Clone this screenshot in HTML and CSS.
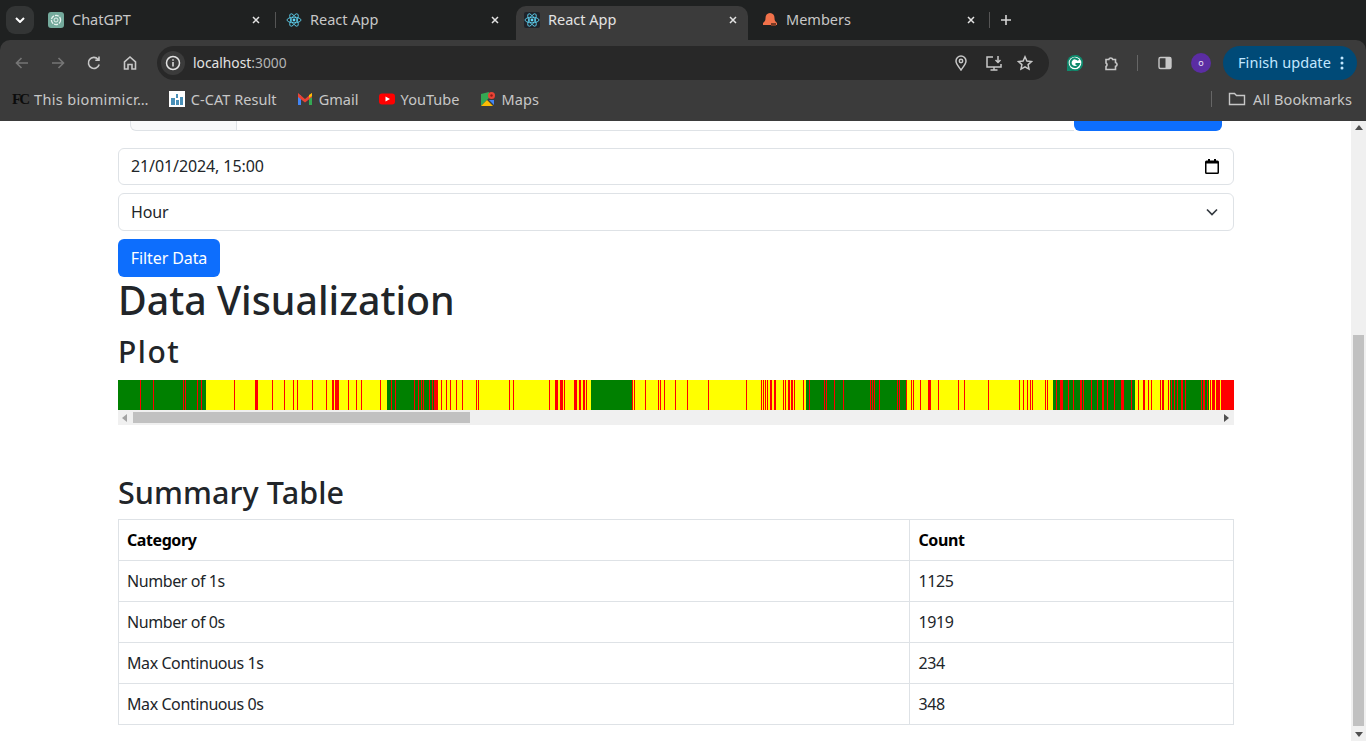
FILE: index.html
```html
<!DOCTYPE html>
<html lang="en">
<head>
	<meta charset="UTF-8">
	<title>React App</title>
	<link rel="stylesheet" href="styles.css">
</head>
<body>
<!-- browser chrome -->
<header class="chrome">
	<div class="tabstrip">
		<div class="tab-menu">
			<svg width="10" height="6" viewBox="0 0 10 6"><path class="ln-white" d="M1 1l4 4 4-4"/></svg>
		</div>
		<div class="tab tab-first">
			<svg class="favicon" viewBox="0 0 16 16"><rect width="16" height="16" rx="3" fill="#74aa9c"/><circle cx="8" cy="8" r="4.6" fill="none" stroke="#e8f3f0" stroke-width="1.3" stroke-dasharray="4 1"/><circle cx="8" cy="8" r="2" fill="none" stroke="#e8f3f0"/></svg>
			<span class="tab-title">ChatGPT</span>
			<svg class="tab-close" viewBox="0 0 8 8"><path d="M1 1l6 6M7 1L1 7"/></svg>
		</div>
		<i class="tab-sep"></i>
		<div class="tab">
			<svg class="favicon" viewBox="0 0 16 16"><g class="atom"><ellipse cx="8" cy="8" rx="7" ry="2.8"/><ellipse cx="8" cy="8" rx="7" ry="2.8" transform="rotate(60 8 8)"/><ellipse cx="8" cy="8" rx="7" ry="2.8" transform="rotate(120 8 8)"/></g><circle cx="8" cy="8" r="1.4" fill="#61dafb"/></svg>
			<span class="tab-title">React App</span>
			<svg class="tab-close" viewBox="0 0 8 8"><path d="M1 1l6 6M7 1L1 7"/></svg>
		</div>
		<div class="tab tab-active">
			<svg class="favicon favicon-dark" viewBox="0 0 16 16"><rect width="16" height="16" rx="2" fill="#20232a"/><g class="atom"><ellipse cx="8" cy="8" rx="7" ry="2.8"/><ellipse cx="8" cy="8" rx="7" ry="2.8" transform="rotate(60 8 8)"/><ellipse cx="8" cy="8" rx="7" ry="2.8" transform="rotate(120 8 8)"/></g><circle cx="8" cy="8" r="1.4" fill="#61dafb"/></svg>
			<span class="tab-title">React App</span>
			<svg class="tab-close" viewBox="0 0 8 8"><path d="M1 1l6 6M7 1L1 7"/></svg>
		</div>
		<div class="tab tab-last">
			<svg class="favicon" viewBox="0 0 16 16"><path fill="#f0714a" d="M8 1c3 0 4.500 2.200 4.500 5 0 2 .5 3.500 2.500 5v2H1v-2c2-1.500 2.500-3 2.500-5C3.500 3.200 5 1 8 1z"/><rect x="9" y="11" width="5" height="3" fill="#7a3a24"/></svg>
			<span class="tab-title">Members</span>
			<svg class="tab-close" viewBox="0 0 8 8"><path d="M1 1l6 6M7 1L1 7"/></svg>
		</div>
		<i class="tab-sep"></i>
		<svg class="tab-new" viewBox="0 0 12 12"><path d="M6 1v10M1 6h10"/></svg>
	</div>

	<div class="toolbar">
		<svg class="tool tool-off" viewBox="0 0 16 16"><path d="M14 8H2.500M7.500 3l-5 5 5 5"/></svg>
		<svg class="tool tool-off tool-fwd" viewBox="0 0 16 16"><path d="M2 8h11.500M8.500 3l5 5-5 5"/></svg>
		<svg class="tool tool-reload" viewBox="0 0 16 16"><path d="M13.200 9.500A5.500 5.500 0 1 1 12 4.200M13 1.500v3.700H9.300"/></svg>
		<svg class="tool tool-home" viewBox="0 0 16 16"><path d="M2.500 14V6.800L8 2l5.500 4.800V14h-3.500V9.500H6V14z"/></svg>
		<div class="omnibox">
			<span class="site-info">
				<svg width="16" height="16" viewBox="0 0 16 16"><circle cx="8" cy="8" r="6.500" fill="none" stroke="#e3e3e3" stroke-width="1.500"/><path d="M8 7v4.500M8 4.300v1.400" stroke="#e3e3e3" stroke-width="1.500"/></svg>
			</span>
			<span class="url">localhost<span class="url-port">:3000</span></span>
			<svg class="omni-icon omni-pin" viewBox="0 0 16 16"><path d="M8 15C5.500 11.500 3 8.800 3 6a5 5 0 0 1 10 0c0 2.800-2.500 5.500-5 9z"/><circle cx="8" cy="6" r="1.700"/></svg>
			<svg class="omni-icon omni-install" viewBox="0 0 18 16"><path d="M8 2H2v10h14V9M5.500 15h7M9 12v3M13 1v6M10.500 5l2.500 2.500L15.500 5"/></svg>
			<svg class="omni-icon omni-star" viewBox="0 0 16 16"><path d="M8 1.800l1.900 4.200 4.600.5-3.400 3.100.9 4.500L8 11.800l-4 2.300.9-4.500L1.500 6.500l4.600-.5z"/></svg>
		</div>
		<svg class="ext-g" viewBox="0 0 18 18"><path fill="#0f8a6d" d="M9 1a8 8 0 1 1-8 8v8h8z"/><circle cx="9" cy="9" r="8" fill="#0f8a6d"/><circle cx="9" cy="9" r="6.300" fill="#fff"/><path fill="none" stroke="#0f8a6d" stroke-width="2" d="M12.500 6.300A4.300 4.300 0 1 0 13 10H9.500"/></svg>
		<svg class="tool tool-ext" viewBox="0 0 16 16"><path d="M3 4.500h2.800a2 2 0 0 1 3.900 0h2.800v3a2 2 0 0 1 0 3.900v3.100H3v-3a2 2 0 0 0 0-3.500z"/></svg>
		<i class="tool-sep"></i>
		<svg class="panel-icon" viewBox="0 0 16 16"><rect x="2" y="2.500" width="12" height="11" rx="1.500" fill="none" stroke="#c7c7c7" stroke-width="1.400"/><rect x="8.500" y="2.500" width="5.500" height="11" fill="#c7c7c7"/></svg>
		<span class="avatar">o</span>
		<div class="update-pill">
			<span class="update-label">Finish update</span>
			<svg width="4" height="14" viewBox="0 0 4 14"><circle cx="2" cy="2" r="1.500"/><circle cx="2" cy="7" r="1.500"/><circle cx="2" cy="12" r="1.500"/></svg>
		</div>
	</div>

	<div class="bookmarks">
		<span class="bm bm-fc"><b class="fc-logo">FC</b><span class="bm-wide">This biomimicr…</span></span>
		<span class="bm">
			<svg class="bm-icon" viewBox="0 0 16 16"><rect width="16" height="16" fill="#fff"/><path fill="#4a90b8" d="M2 7h4v7H2zM7 3h2v4H7zM7 9h3v5H7zM11 6h3v8h-3z"/></svg>C-CAT Result
		</span>
		<span class="bm">
			<svg class="bm-icon" viewBox="0 0 16 16"><path fill="#4285f4" d="M1 4h3v10H1z"/><path fill="#34a853" d="M12 4h3v10h-3z"/><path fill="#ea4335" d="M1 2l7 6 7-6v4l-7 5.500L1 6z"/><path fill="#fbbc04" d="M12 4l3-2v3l-3 2z"/></svg>Gmail
		</span>
		<span class="bm">
			<svg class="bm-icon" viewBox="0 0 16 16"><rect y="2.500" width="16" height="11" rx="3" fill="#f00"/><path fill="#fff" d="M6.500 5.500v5L11 8z"/></svg>YouTube
		</span>
		<span class="bm">
			<svg class="bm-icon" viewBox="0 0 16 16"><path fill="#34a853" d="M1 3l8-2v6l-8 8z"/><path fill="#fbbc04" d="M1 15l6-6 6 6z"/><path fill="#4285f4" d="M9 9l5 5V9z"/><circle cx="11.500" cy="4.500" r="3.500" fill="#ea4335"/><circle cx="11.500" cy="4.500" r="1.200" fill="#8c1d18"/></svg>Maps
		</span>
		<i class="bm-sep"></i>
		<span class="bm bm-all">
			<svg class="bm-folder" viewBox="0 0 18 16"><path d="M1.500 13.500V2.500h5l2 2h8v9z"/></svg>All Bookmarks
		</span>
	</div>
</header>

<div class="viewport">
	<main class="page">
		<!-- input group, scrolled mostly out of view -->
		<div class="search-stub">
			<div class="stub-addon"></div>
			<div class="stub-input"></div>
			<div class="stub-btn"></div>
		</div>

		<div class="form-control">
			<span>21/01/2024, 15:00</span>
			<svg class="cal-icon" viewBox="0 0 14 15"><path d="M3 0h2v2H3zM9 0h2v2H9z" fill="#000"/><path fill="#000" d="M1.500 1.500h11A1.500 1.500 0 0 1 14 3v10.500a1.500 1.500 0 0 1-1.500 1.500h-11A1.500 1.500 0 0 1 0 13.500V3a1.500 1.500 0 0 1 1.500-1.500zM1.500 4.500v9h11v-9z"/></svg>
		</div>
		<div class="form-control form-select">
			<span>Hour</span>
			<svg class="chev-icon" viewBox="0 0 12 8"><path d="M1 1.500l5 5 5-5"/></svg>
		</div>
		<button class="btn-primary">Filter Data</button>

		<h1>Data Visualization</h1>
		<h3 class="plot-title">Plot</h3>

		<div class="plot">
			<svg class="stripes" width="1116" height="30" viewBox="0 0 1116 30" shape-rendering="crispEdges">
				<rect class="s-yellow" width="1116" height="30"/>
				<path class="s-green" d="M0 0h88v30H0zM269 0h51v30h-51zM473 0h41v30h-41zM688 0h100v30H688zM935 0h82v30h-82zM1052 0h40v30h-40z"/>
				<path class="s-red" d="M22 0h1v30h-1zM35 0h1v30h-1zM65 0h1v30h-1zM67 0h1v30h-1zM79 0h1v30h-1zM83 0h1v30h-1zM116 0h1v30h-1zM137 0h3v30h-3zM154 0h1v30h-1zM166 0h1v30h-1zM175 0h1v30h-1zM179 0h1v30h-1zM194 0h1v30h-1zM208 0h1v30h-1zM214 0h2v30h-2zM217 0h4v30h-4zM230 0h1v30h-1zM238 0h1v30h-1zM243 0h1v30h-1zM262 0h1v30h-1zM273 0h1v30h-1zM277 0h1v30h-1zM296 0h1v30h-1zM300 0h1v30h-1zM303 0h1v30h-1zM305 0h1v30h-1zM311 0h1v30h-1zM314 0h1v30h-1zM316 0h4v30h-4zM323 0h1v30h-1zM328 0h1v30h-1zM332 0h1v30h-1zM338 0h1v30h-1zM344 0h1v30h-1zM358 0h1v30h-1zM360 0h1v30h-1zM391 0h1v30h-1zM395 0h1v30h-1zM431 0h1v30h-1zM437 0h3v30h-3zM442 0h3v30h-3zM446 0h1v30h-1zM456 0h3v30h-3zM461 0h2v30h-2zM465 0h2v30h-2zM468 0h1v30h-1zM514 0h1v30h-1zM516 0h1v30h-1zM527 0h1v30h-1zM540 0h1v30h-1zM542 0h1v30h-1zM546 0h1v30h-1zM557 0h1v30h-1zM569 0h1v30h-1zM590 0h1v30h-1zM628 0h1v30h-1zM643 0h1v30h-1zM645 0h1v30h-1zM647 0h1v30h-1zM649 0h1v30h-1zM652 0h2v30h-2zM656 0h2v30h-2zM665 0h1v30h-1zM667 0h1v30h-1zM670 0h2v30h-2zM673 0h2v30h-2zM676 0h1v30h-1zM685 0h1v30h-1zM691 0h1v30h-1zM706 0h1v30h-1zM708 0h1v30h-1zM716 0h1v30h-1zM725 0h1v30h-1zM752 0h1v30h-1zM754 0h1v30h-1zM756 0h1v30h-1zM761 0h1v30h-1zM779 0h1v30h-1zM781 0h1v30h-1zM788 0h1v30h-1zM793 0h1v30h-1zM795 0h1v30h-1zM802 0h1v30h-1zM810 0h3v30h-3zM820 0h1v30h-1zM840 0h1v30h-1zM846 0h1v30h-1zM870 0h1v30h-1zM901 0h1v30h-1zM905 0h1v30h-1zM909 0h1v30h-1zM912 0h1v30h-1zM914 0h1v30h-1zM927 0h1v30h-1zM929 0h1v30h-1zM938 0h1v30h-1zM942 0h3v30h-3zM950 0h1v30h-1zM955 0h1v30h-1zM962 0h2v30h-2zM965 0h1v30h-1zM973 0h1v30h-1zM979 0h1v30h-1zM984 0h2v30h-2zM989 0h1v30h-1zM996 0h1v30h-1zM1003 0h3v30h-3zM1013 0h1v30h-1zM1020 0h1v30h-1zM1025 0h2v30h-2zM1030 0h1v30h-1zM1033 0h1v30h-1zM1042 0h1v30h-1zM1044 0h2v30h-2zM1050 0h1v30h-1zM1053 0h1v30h-1zM1056 0h1v30h-1zM1059 0h1v30h-1zM1063 0h2v30h-2zM1067 0h1v30h-1zM1083 0h1v30h-1zM1085 0h2v30h-2zM1089 0h1v30h-1zM1092 0h1v30h-1zM1094 0h3v30h-3zM1098 0h4v30h-4zM1103 0h13v30h-13z"/>
				<path class="s-yellow" d="M1091 0h1v30h-1z"/>
			</svg>
			<div class="hscroll">
				<span class="arrow-left"></span>
				<span class="hscroll-thumb"></span>
				<span class="arrow-right"></span>
			</div>
		</div>

		<h3 class="table-title">Summary Table</h3>
		<table class="summary">
			<thead>
				<tr><th class="col-cat">Category</th><th>Count</th></tr>
			</thead>
			<tbody>
				<tr><td>Number of 1s</td><td>1125</td></tr>
				<tr><td>Number of 0s</td><td>1919</td></tr>
				<tr><td>Max Continuous 1s</td><td>234</td></tr>
				<tr><td>Max Continuous 0s</td><td>348</td></tr>
			</tbody>
		</table>
	</main>

	<div class="vscroll">
		<span class="arrow-up"></span>
		<span class="vscroll-thumb"></span>
		<span class="arrow-down"></span>
	</div>
</div>
</body>
</html>
```

FILE: styles.css
```css
* {
	box-sizing: border-box;
}

html, body {
	height: 100%;
}

body {
	margin: 0;
	display: flex;
	flex-direction: column;
	overflow: hidden;
	background: #fff;
	color: #212529;
	font-family: "Noto Sans", "Liberation Sans", sans-serif;
	font-size: 16px;
	line-height: 24px;
}

/* browser chrome */
.chrome {
	flex: none;
	height: 121px;
	background: #1f2121;
	color: #c7c7c7;
	font-size: 14.500px;
}

.tabstrip {
	height: 40px;
	display: flex;
	align-items: flex-end;
}

.tab-menu {
	width: 28px;
	height: 28px;
	margin: 0 0 6px 6px;
	border-radius: 9px;
	background: #333535;
	display: flex;
	align-items: center;
	justify-content: center;
}

.ln-white {
	fill: none;
	stroke: #fff;
	stroke-width: 2;
}

.tab {
	width: 238px;
	height: 34px;
	padding: 0 15px 6px 10px;
	display: flex;
	align-items: center;
	gap: 8px;
}

.tab-first {
	width: 237px;
	margin-left: 4px;
}

.tab-active {
	width: 232px;
	margin-left: 2px;
	padding: 0 11px 6px 8px;
	border-radius: 10px 10px 0 0;
	background: #3b3b3b;
	color: #e3e3e3;
}

.tab-last {
	width: 235px;
	margin-left: 6px;
	padding-left: 8px;
	padding-right: 14px;
}

.favicon {
	width: 16px;
	height: 16px;
	flex: none;
}

.atom {
	fill: none;
	stroke: #61dafb;
	stroke-width: .8;
}

.tab-title {
	flex: 1;
	margin-bottom: 2px;
}

.tab-close {
	width: 8px;
	height: 8px;
	flex: none;
	fill: none;
	stroke: #e3e3e3;
	stroke-width: 1.500;
}

.tab-sep {
	width: 1px;
	height: 16px;
	margin-bottom: 12px;
	background: #555;
}

.tab-new {
	width: 12px;
	height: 12px;
	margin: 0 0 14px 10px;
	fill: none;
	stroke: #d5d5d5;
	stroke-width: 1.600;
}

.toolbar {
	height: 46px;
	padding: 6px 8px 6px 0;
	background: #3b3b3b;
	border-radius: 10px 10px 0 0;
	display: flex;
	align-items: center;
}

.tool {
	width: 16px;
	height: 16px;
	flex: none;
	fill: none;
	stroke: #c7c7c7;
	stroke-width: 1.600;
}

.tool-off {
	stroke: #767676;
	margin-left: 14px;
}

.tool-fwd {
	margin-left: 20px;
}

.tool-reload {
	margin-left: 20px;
}

.tool-home {
	margin-left: 20px;
}

.omnibox {
	width: 892px;
	height: 34px;
	margin-left: 19px;
	padding: 0 16px 0 4px;
	flex: none;
	border-radius: 17px;
	background: #282828;
	display: flex;
	align-items: center;
}

.site-info {
	width: 24px;
	height: 24px;
	border-radius: 50%;
	background: #3b3b3b;
	display: flex;
	align-items: center;
	justify-content: center;
}

.url {
	flex: 1;
	margin-left: 8px;
	color: #e3e3e3;
	font-size: 13.800px;
}

.url-port {
	color: #b4b4b4;
}

.omni-icon {
	flex: none;
	fill: none;
	stroke: #c7c7c7;
	stroke-width: 1.500;
}

.omni-pin {
	width: 16px;
	height: 16px;
}

.omni-install {
	width: 18px;
	height: 16px;
	margin-left: 16px;
	margin-right: 1px;
}

.omni-star {
	width: 16px;
	height: 16px;
	margin-left: 13px;
}

.ext-g {
	width: 18px;
	height: 18px;
	margin-left: 17px;
	flex: none;
}

.tool-ext {
	margin-left: 19px;
}

.tool-sep {
	width: 1px;
	height: 16px;
	margin-left: 18px;
	background: #666;
}

.panel-icon {
	width: 16px;
	height: 16px;
	margin-left: 19px;
}

.avatar {
	width: 20px;
	height: 20px;
	margin-left: 18px;
	border-radius: 50%;
	background: #5b2da3;
	color: #e8e0f5;
	font-size: 9px;
	line-height: 19px;
	text-align: center;
}

.update-pill {
	width: 134px;
	height: 34px;
	margin-left: 12px;
	padding: 0 13px 0 14px;
	border-radius: 17px;
	background: #004a77;
	color: #c2e7ff;
	fill: #c2e7ff;
	display: flex;
	align-items: center;
	justify-content: space-between;
}

.update-label {
	margin-bottom: 2px;
	margin-left: 1px;
	letter-spacing: .07px;
}

.bookmarks {
	height: 35px;
	padding: 0 14px 9px 12px;
	background: #3b3b3b;
	display: flex;
	align-items: center;
	gap: 20px;
}

.bm {
	display: flex;
	align-items: center;
	gap: 6px;
	white-space: nowrap;
	letter-spacing: .05px;
}

.fc-logo {
	width: 16px;
	color: #0c0c0c;
	font-family: "Liberation Serif", serif;
	font-size: 15px;
	letter-spacing: -2px;
}

.bm-wide {
	letter-spacing: .35px;
}

.bm-icon {
	width: 16px;
	height: 16px;
	flex: none;
}

.bm-sep {
	width: 1px;
	height: 16px;
	margin-left: auto;
	background: #666;
}

.bm-all {
	margin-left: -4px;
	gap: 7px;
	letter-spacing: .1px;
}

.bm-folder {
	width: 18px;
	height: 16px;
	fill: none;
	stroke: #c7c7c7;
	stroke-width: 1.400;
}

/* page */
.viewport {
	flex: 1;
	min-height: 0;
	display: flex;
}

.page {
	flex: 1;
	padding: 0 117px 0 118px;
}

.search-stub {
	height: 10px;
	margin: 0 12px 17px;
	display: flex;
}

.stub-addon {
	width: 107px;
	background: #f8f9fa;
	border: 1px solid #dee2e6;
	border-top: 0;
	border-radius: 0 0 0 6px;
}

.stub-input {
	flex: 1;
	border-bottom: 1px solid #dee2e6;
}

.stub-btn {
	width: 148px;
	background: #0d6efd;
	border-radius: 0 0 6px 6px;
}

.form-control {
	height: 38px;
	margin-bottom: 8px;
	padding: 0 12px;
	border: 1px solid #dee2e6;
	border-radius: 6px;
	letter-spacing: -.1px;
	display: flex;
	align-items: center;
	justify-content: space-between;
}

.search-stub + .form-control {
	height: 37px;
	padding-bottom: 1px;
}

.cal-icon {
	width: 14px;
	height: 15px;
	margin-right: 2px;
}

.chev-icon {
	width: 12px;
	height: 8px;
	margin-right: 3px;
	fill: none;
	stroke: #343a40;
	stroke-width: 1.700;
}

.btn-primary {
	width: 102px;
	height: 38px;
	padding: 0;
	display: block;
	border: 0;
	border-radius: 6px;
	background: #0d6efd;
	color: #fff;
	font: inherit;
	letter-spacing: -.1px;
}

h1, h3 {
	margin: 0;
	font-weight: 500;
}

h1 {
	font-size: 39.300px;
	line-height: 48px;
	margin-top: -1px;
	margin-bottom: 11px;
}

h3 {
	font-size: 30.500px;
	line-height: 34px;
}

.plot-title {
	margin-bottom: 11px;
	font-size: 30px;
	letter-spacing: 1.500px;
}

.stripes {
	display: block;
}

.s-yellow {
	fill: #ff0;
}

.s-green {
	fill: #008000;
}

.s-red {
	fill: #f00;
}

.hscroll {
	height: 15px;
	background: #f0f0f0;
	display: flex;
	align-items: center;
}

.hscroll-thumb {
	width: 337px;
	height: 11px;
	margin-left: 6px;
	background: #c1c1c1;
}

.arrow-left, .arrow-right, .arrow-up, .arrow-down {
	width: 0;
	height: 0;
	display: block;
	border: 4px solid transparent;
}

.arrow-left {
	margin-left: 4px;
	border-left-width: 0;
	border-right: 5px solid #a3a3a3;
}

.arrow-right {
	margin-left: auto;
	margin-right: 5px;
	border-right-width: 0;
	border-left: 5px solid #505050;
}

.table-title {
	margin-top: 50px;
	margin-bottom: 10px;
	letter-spacing: .1px;
}

.summary {
	width: 100%;
	border-collapse: collapse;
	color: #212529;
	letter-spacing: -.42px;
}

.summary th, .summary td {
	height: 41px;
	padding: 8px;
	border: 1px solid #dee2e6;
	text-align: left;
	font-weight: 400;
}

.summary th {
	font-weight: 700;
	color: #000;
}

.summary th:last-child, .summary td:last-child {
	padding-left: 8.500px;
}

.col-cat {
	width: 791px;
}

.vscroll {
	width: 15px;
	flex: none;
	background: #f0f0f0;
	display: flex;
	flex-direction: column;
	align-items: center;
}

.arrow-up {
	margin-top: 4px;
	border-top-width: 0;
	border-bottom: 5px solid #505050;
}

.vscroll-thumb {
	width: 11px;
	height: 391px;
	margin-top: 205px;
	background: #c1c1c1;
}

.arrow-down {
	margin-top: auto;
	margin-bottom: 4px;
	border-bottom-width: 0;
	border-top: 5px solid #505050;
}
```
